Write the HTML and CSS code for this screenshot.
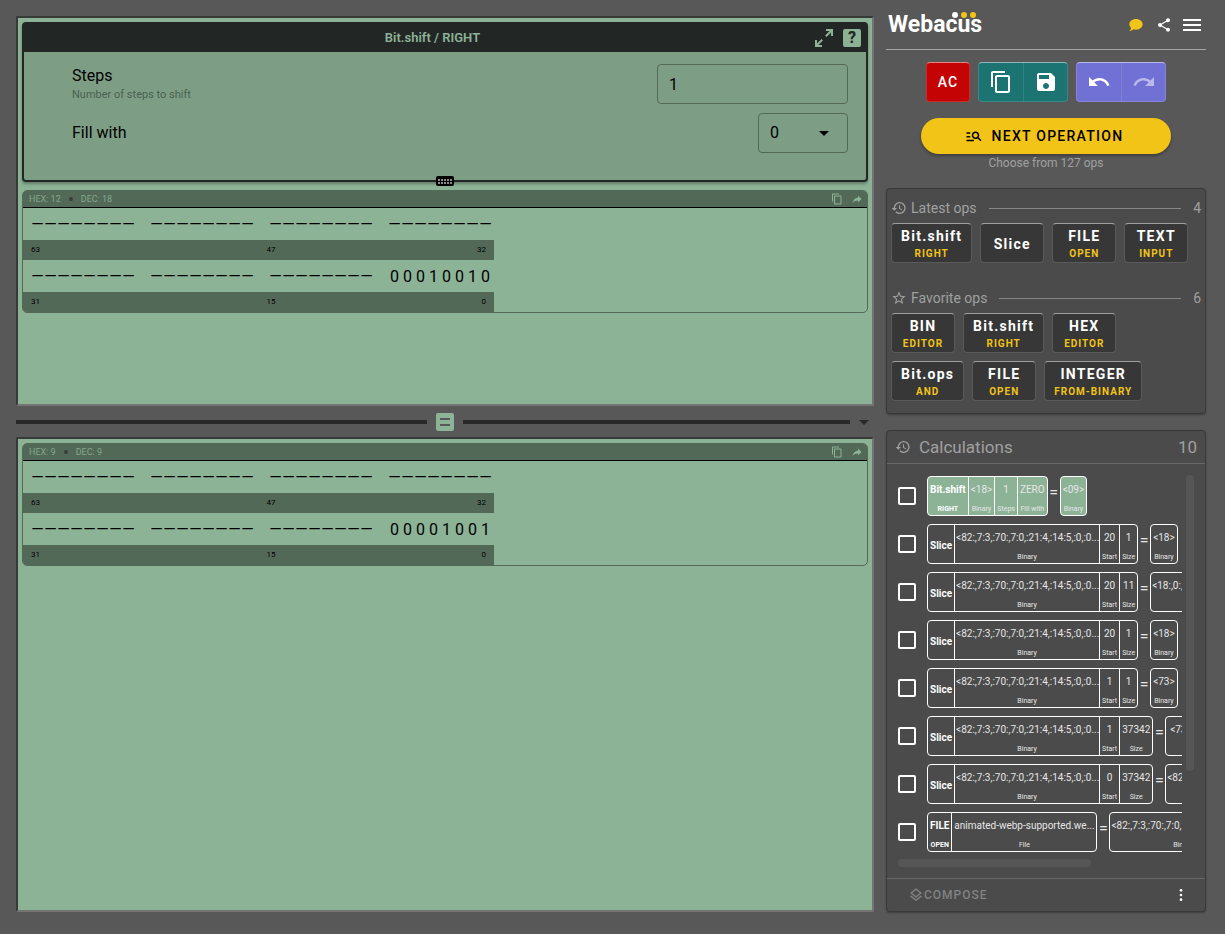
FILE: index.html
```html
<!DOCTYPE html>
<html lang="en">
<head>
<meta charset="utf-8">
<title>Webacus</title>
<link rel="stylesheet" href="styles.css">
</head>
<body>
<svg class="sprite" aria-hidden="true">
  <symbol id="copy" viewBox="0 0 24 24"><path d="M16 1H4c-1.1 0-2 .9-2 2v14h2V3h12V1zm3 4H8c-1.1 0-2 .9-2 2v14c0 1.1.9 2 2 2h11c1.1 0 2-.9 2-2V7c0-1.1-.9-2-2-2zm0 16H8V7h11v14z"/></symbol>
  <symbol id="save" viewBox="0 0 24 24"><path d="M17 3H5c-1.11 0-2 .9-2 2v14c0 1.1.89 2 2 2h14c1.1 0 2-.9 2-2V7l-4-4zm-5 16c-1.66 0-3-1.34-3-3s1.34-3 3-3 3 1.34 3 3-1.34 3-3 3zm3-10H5V5h10v4z"/></symbol>
  <symbol id="undo" viewBox="0 0 24 24"><path d="M12.5 8c-2.65 0-5.05.99-6.9 2.6L2 7v9h9l-3.62-3.62c1.39-1.16 3.16-1.88 5.12-1.88 3.54 0 6.55 2.31 7.6 5.5l2.37-.78C21.08 11.03 17.15 8 12.5 8z"/></symbol>
  <symbol id="redo" viewBox="0 0 24 24"><path d="M18.4 10.6C16.55 8.99 14.15 8 11.5 8c-4.65 0-8.58 3.03-9.96 7.22L3.9 16c1.05-3.19 4.05-5.5 7.6-5.5 1.95 0 3.73.72 5.12 1.88L13 16h9V7l-3.6 3.6z"/></symbol>
  <symbol id="nodes" viewBox="0 0 24 24"><path d="M18 16.08c-.76 0-1.44.3-1.96.77L8.91 12.7c.05-.23.09-.46.09-.7s-.04-.47-.09-.7l7.05-4.11c.54.5 1.25.81 2.04.81 1.66 0 3-1.34 3-3s-1.34-3-3-3-3 1.34-3 3c0 .24.04.47.09.7L8.04 9.81C7.5 9.31 6.79 9 6 9c-1.66 0-3 1.34-3 3s1.34 3 3 3c.79 0 1.5-.31 2.04-.81l7.12 4.16c-.05.21-.08.43-.08.65 0 1.61 1.31 2.92 2.92 2.92s2.92-1.31 2.92-2.92-1.31-2.92-2.92-2.92z"/></symbol>
  <symbol id="chat" viewBox="0 0 24 24"><path d="M12 3C17.5 3 22 6.58 22 11C22 15.42 17.5 19 12 19C10.76 19 9.57 18.82 8.47 18.5C5.55 21 2 21 2 21C4.33 18.67 4.7 17.1 4.75 16.5C3.05 15.07 2 13.13 2 11C2 6.58 6.5 3 12 3Z"/></symbol>
  <symbol id="menu" viewBox="0 0 24 24"><path d="M3 6h18v2H3zM3 11h18v2H3zM3 16h18v2H3z"/></symbol>
  <symbol id="search" viewBox="0 0 24 24"><path d="M7 9H2V7h5v2zm0 3H2v2h5v-2zm13.59 7l-3.83-3.83c-.8.52-1.74.83-2.76.83-2.76 0-5-2.24-5-5s2.24-5 5-5 5 2.24 5 5c0 1.02-.31 1.96-.83 2.75L22 17.59 20.59 19zM17 11c0-1.65-1.35-3-3-3s-3 1.35-3 3 1.35 3 3 3 3-1.35 3-3zM2 19h10v-2H2v2z"/></symbol>
  <symbol id="history" viewBox="0 0 24 24"><path d="M13.5 8H12V13L16.28 15.54L17 14.33L13.5 12.25V8M13 3A9 9 0 0 0 4 12H1L4.96 16.03L9 12H6A7 7 0 0 1 13 5A7 7 0 0 1 20 12A7 7 0 0 1 13 19C11.07 19 9.32 18.21 8.06 16.94L6.64 18.36C8.27 20 10.5 21 13 21A9 9 0 0 0 22 12A9 9 0 0 0 13 3"/></symbol>
  <symbol id="star" viewBox="0 0 24 24"><path d="M12 15.39L8.24 17.66L9.23 13.38L5.91 10.5L10.29 10.13L12 6.09L13.71 10.13L18.09 10.5L14.77 13.38L15.76 17.66M22 9.24L14.81 8.63L12 2L9.19 8.63L2 9.24L7.45 13.97L5.82 21L12 17.27L18.18 21L16.54 13.97L22 9.24Z"/></symbol>
  <symbol id="share" viewBox="0 0 24 24"><path d="M21 12L14 5V9C7 10 4 15 3 20C5.5 16.5 9 14.9 14 14.9V19L21 12Z"/></symbol>
  <symbol id="expand" viewBox="0 0 24 24"><path d="M10 21V19H6.41L10.91 14.5L9.5 13.09L5 17.59V14H3V21H10M14.5 10.91L19 6.41V10H21V3H14V5H17.59L13.09 9.5L14.5 10.91Z"/></symbol>
  <symbol id="layers" viewBox="0 0 24 24"><path d="M12 18.54L19.37 12.8L21 14.07L12 21.07L3 14.07L4.62 12.81L12 18.54M12 16L3 9L12 2L21 9L12 16M12 4.53L6.26 9L12 13.47L17.74 9L12 4.53Z"/></symbol>
  <symbol id="dots" viewBox="0 0 24 24"><circle cx="12" cy="5" r="2"/><circle cx="12" cy="12" r="2"/><circle cx="12" cy="19" r="2"/></symbol>
</svg>
<div class="app">
  <main class="work">
    <section class="screen">
      <div class="operation">
        <header class="operation-head">
          <h1>Bit.shift / RIGHT</h1>
          <div class="head-actions">
            <button class="bare" aria-label="Expand"><svg class="icon24"><use href="#expand"/></svg></button>
            <button class="help" aria-label="Help">?</button>
          </div>
        </header>
        <div class="params">
          <div class="param">
            <div class="param-text"><label for="steps">Steps</label><p class="hint">Number of steps to shift</p></div>
            <input id="steps" class="field" type="text" value="1">
          </div>
          <div class="param">
            <label for="fill">Fill with</label>
            <div class="select-wrap"><select id="fill" class="field"><option>0</option><option>1</option></select></div>
          </div>
        </div>
        <button class="keyboard" aria-label="Keyboard"><svg viewBox="0 0 18 10"><path d="M2 4h14M2 7h14" stroke="#8a8a8a" stroke-width="2" stroke-dasharray="2 1" fill="none"/></svg></button>
      </div>
      <div class="binary" data-hex="12" data-dec="18"></div>
    </section>
    <div class="divider">
      <span class="rule rule-left"></span>
      <button class="equals" aria-label="Calculate"><svg viewBox="0 0 18 18"><path d="M4 5h10v2H4zM4 11h10v2H4z"/></svg></button>
      <span class="rule"></span>
      <button class="caret" aria-label="More"></button>
    </div>
    <section class="screen">
      <div class="binary" data-hex="9" data-dec="9"></div>
    </section>
  </main>
  <aside class="side">
    <header class="brand">
      <div class="logo">Webacus<span class="beads"><i></i><i></i><i></i></span></div>
      <nav class="brand-actions">
        <button class="bare chat" aria-label="Feedback"><svg class="icon16"><use href="#chat"/></svg></button>
        <button class="bare" aria-label="Share"><svg class="icon16"><use href="#nodes"/></svg></button>
        <button class="bare" aria-label="Menu"><svg class="icon24"><use href="#menu"/></svg></button>
      </nav>
    </header>
    <div class="tools">
      <div class="group red"><button>AC</button></div>
      <div class="group teal"><button aria-label="Copy"><svg class="icon24"><use href="#copy"/></svg></button><button aria-label="Save"><svg class="icon24"><use href="#save"/></svg></button></div>
      <div class="group violet"><button aria-label="Undo"><svg class="icon24"><use href="#undo"/></svg></button><button aria-label="Redo" disabled><svg class="icon24"><use href="#redo"/></svg></button></div>
    </div>
    <button class="next"><svg class="icon18"><use href="#search"/></svg>NEXT OPERATION</button>
    <p class="count">Choose from 127 ops</p>
    <section class="panel ops">
      <h2 class="ops-title"><svg class="icon16"><use href="#history"/></svg>Latest ops<span class="line"></span><span>4</span></h2>
      <div class="chips">
        <button class="chip">Bit.shift<small>RIGHT</small></button>
        <button class="chip">Slice</button>
        <button class="chip">FILE<small>OPEN</small></button>
        <button class="chip">TEXT<small>INPUT</small></button>
      </div>
      <h2 class="ops-title"><svg class="icon16"><use href="#star"/></svg>Favorite ops<span class="line"></span><span>6</span></h2>
      <div class="chips">
        <button class="chip">BIN<small>EDITOR</small></button>
        <button class="chip">Bit.shift<small>RIGHT</small></button>
        <button class="chip">HEX<small>EDITOR</small></button>
        <button class="chip">Bit.ops<small>AND</small></button>
        <button class="chip">FILE<small>OPEN</small></button>
        <button class="chip">INTEGER<small>FROM-BINARY</small></button>
      </div>
    </section>
    <section class="panel calcs">
      <h2 class="calcs-title"><svg class="icon16"><use href="#history"/></svg>Calculations<span class="total">10</span></h2>
      <div class="calcs-body">
        <ul class="calc-list"></ul>
        <div class="track-v"><span></span></div>
        <div class="track-h"><span></span></div>
      </div>
      <footer class="calcs-foot">
        <button class="compose" disabled><svg class="icon16"><use href="#layers"/></svg>COMPOSE</button>
        <button class="bare" aria-label="More options"><svg class="icon16"><use href="#dots"/></svg></button>
      </footer>
    </section>
  </aside>
</div>
<script src="app.js"></script>
</body>
</html>
```
FILE: styles.css
```css
* { box-sizing: border-box; }
body { margin: 0; background: #585858; color: #fff; font: 16px/20px Roboto, sans-serif; }
h1, h2, p, ul { margin: 0; padding: 0; font-weight: 400; }
button, input, select { font: inherit; color: inherit; margin: 0; }
button { padding: 0; border: 0; background: none; }
svg { display: block; fill: currentColor; }
.sprite { position: absolute; width: 0; height: 0; }
.icon24 { width: 24px; height: 24px; }
.icon18 { width: 18px; height: 18px; }
.icon16 { width: 16px; height: 16px; }
.bare { display: flex; justify-content: center; }

.app { display: grid; grid-template-columns: minmax(0, 1fr) 320px; gap: 12px; height: 100vh; min-height: 800px; padding: 0 19px 22px 16px; }

/* Left side: operation and result screens */
.work { display: grid; grid-template-rows: minmax(0, 82fr) 31px minmax(0, 100fr); padding-top: 16px; }
.screen { padding: 4px; background: #8db397; border: 2px solid #373a37; border-right-color: #747474; border-bottom-color: #747474; border-radius: 2px; overflow: hidden; }
.operation { position: relative; margin-bottom: 8px; background: #7d9e85; border: 2px solid #222625; border-radius: 4px; box-shadow: 0 2px 3px rgba(0, 0, 0, .3); }
.operation-head { display: grid; grid-template-columns: 1fr auto 1fr; align-items: center; height: 28px; padding-right: 5px; color: #8db397; background: #222625; }
.operation-head h1 { grid-column: 2; padding-right: 20px; font-size: 13px; font-weight: 600; }
.head-actions { display: flex; justify-content: flex-end; align-items: center; gap: 7px; }
.help { width: 18px; height: 18px; border-radius: 2px; background: #8db397; color: #222625; font-size: 16px; font-weight: 800; line-height: 18px; text-align: center; }
.params { display: grid; gap: 9px; padding: 12px 18px 27px 48px; color: #000; }
.param { display: flex; justify-content: space-between; align-items: center; }
.param-text { align-self: end; }
.hint { font-size: 11px; line-height: 18px; color: #4a6150; }
.field { height: 40px; padding: 0 11px; border: 1px solid #536957; border-radius: 4px; background: transparent; }
input.field { width: 191px; }
.select-wrap { position: relative; }
select.field { appearance: none; display: block; width: 90px; }
.select-wrap::after { content: ""; position: absolute; right: 19px; top: 18px; border: 5px solid transparent; border-top-color: #000; border-bottom: 0; pointer-events: none; }
.keyboard { position: absolute; left: 50%; bottom: -6px; width: 18px; height: 10px; margin-left: -9px; border-radius: 2px; background: #000; }

.binary { border: 1px solid #536957; border-radius: 5px; overflow: hidden; color: #000; }
.binary-head { display: flex; align-items: center; height: 17px; padding: 0 4px 0 6px; background: #536957; border-bottom: 1px solid #000; color: #82a68b; font-size: 9px; line-height: 16px; }
.dot { width: 4px; height: 4px; margin: 0 8px; border-radius: 50%; background: #373d39; }
.binary-actions { display: flex; gap: 8px; margin-left: auto; color: #8db397; }
.binary-actions svg { width: 12px; height: 12px; }
.bits { display: flex; gap: 15px; height: 32px; padding-left: 8px; }
.byte { display: grid; grid-template-columns: repeat(8, 13px); line-height: 33px; text-align: center; }
.scale { display: grid; grid-template-columns: 1fr 1fr; width: 471px; height: 20px; background: #536957; font-size: 8px; line-height: 20px; }
.scale div { display: flex; justify-content: space-between; padding: 0 8px; }

.divider { display: flex; align-items: center; padding: 2px 5px 0 0; }
.rule { flex: 1; height: 4px; background: #292929; }
.rule-left { flex: 0 1 411px; }
.equals { width: 18px; height: 18px; margin: 0 9px; border-radius: 2px; background: #8db397; color: #585858; }
.caret { margin-left: 9px; border: 5px solid transparent; border-top-color: #292929; border-bottom: 0; }

/* Sidebar */
.side { display: flex; flex-direction: column; min-height: 0; }
.brand { display: flex; align-items: center; justify-content: space-between; height: 50px; padding: 0 2px; border-bottom: 1px solid #a5a5a5; }
.logo { position: relative; font-size: 23px; font-weight: 700; line-height: 28px; }
.beads { position: absolute; right: 6px; top: 1px; display: flex; gap: 3px; }
.beads i { width: 6px; height: 6px; border-radius: 50%; background: #f2c418; }
.beads i:first-child { background: #fff; }
.brand-actions { display: flex; align-items: center; gap: 4px; }
.brand-actions .bare { width: 24px; }
.chat { color: #f2c418; }
.tools { display: flex; justify-content: center; gap: 8px; margin: 12px 0 16px; }
.group { display: flex; height: 40px; border-radius: 4px; border: 1px solid rgba(255, 255, 255, .15); border-top-color: rgba(255, 255, 255, .5); }
.group button { display: grid; place-items: center; width: 44px; font-size: 14px; font-weight: 500; letter-spacing: 1px; }
.group button + button { border-left: 1px solid rgba(255, 255, 255, .1); }
.group button:disabled svg { opacity: .5; }
.group.red button { width: 42px; }
.red { background: #c40404; }
.teal { background: #1b7472; }
.violet { background: #7170d4; }
.next { display: flex; align-items: center; justify-content: center; gap: 9px; align-self: center; flex: none; width: 250px; height: 36px; border-radius: 18px; background: #f2c418; color: #000; font-size: 14px; font-weight: 500; letter-spacing: .09em; box-shadow: 0 2px 3px rgba(0, 0, 0, .3); }
.next svg { margin-left: -4px; }
.count { color: #a0a0a0; font-size: 12px; line-height: 18px; text-align: center; }
.panel { background: #4b4b4b; border: 1px solid #393939; border-radius: 4px; box-shadow: 0 1px 2px rgba(0, 0, 0, .3); }
.ops { flex: none; margin: 16px 0; padding: 9px 4px 12px; }
.ops-title { display: flex; align-items: center; gap: 4px; color: #a0a0a0; font-size: 14px; }
.ops-title .line { flex: 1; height: 1px; margin: 0 8px; background: #868686; }
.chips { display: flex; flex-wrap: wrap; gap: 8px; margin-top: 5px; padding-right: 8px; }
.chips + .ops-title { margin-top: 25px; }
.chip { min-width: 64px; height: 40px; padding: 3px 9px 0; border: 1px solid #5a5a5a; border-top-color: #a0a0a0; border-radius: 4px; background: #373737; font-size: 14px; font-weight: 700; line-height: 17px; letter-spacing: .09em; }
.chip small { display: block; color: #f2c418; font-size: 10px; letter-spacing: 1px; }

.calcs { flex: 1; min-height: 0; display: flex; flex-direction: column; }
.calcs-title { display: flex; align-items: center; gap: 8px; height: 33px; padding: 0 8px; border-bottom: 1px solid #686868; color: #a0a0a0; font-size: 17px; }
.total { margin-left: auto; }
.calcs-body { flex: 1; min-height: 0; display: grid; grid-template: minmax(0, 1fr) 8px / minmax(0, 1fr) 8px; gap: 4px; padding: 11px; }
.calc-list { display: flex; flex-direction: column; gap: 8px; min-height: 0; padding-top: 1px; overflow: hidden; list-style: none; }
.calc { display: flex; align-items: center; flex: none; height: 40px; }
.calc input { appearance: none; flex: none; width: 18px; height: 18px; margin: 0 11px 0 0; border: 2px solid #fff; border-radius: 2px; }
.box { display: flex; flex: none; height: 40px; border: 1px solid #fff; border-radius: 4px; overflow: hidden; }
.cell { display: flex; flex-direction: column; justify-content: space-between; padding: 5px 2px 1px; color: #e6e6e6; font-size: 10px; line-height: 16px; text-align: center; }
.cell + .cell { border-left: 1px solid #fff; }
.cell small { font-size: 7px; line-height: 9px; }
.name { color: #fff; font-weight: 700; }
.name:not(:has(small)) { justify-content: center; }
.cell.wide { width: 145px; padding-left: 1px; padding-right: 1px; }
.value { white-space: nowrap; }
.eq { flex: none; width: 12px; padding-bottom: 6px; color: #e6e6e6; font-size: 16px; text-align: center; }
.active .box { background: #8db397; }
.track-v, .track-h { display: flex; }
.track-v span { width: 100%; height: 78%; border-radius: 4px; background: #565656; }
.track-h span { width: 68%; border-radius: 4px; background: #565656; }
.calcs-foot { display: flex; align-items: center; justify-content: space-between; height: 33px; padding: 0 16px 0 21px; border-top: 1px solid #686868; }
.compose { display: flex; align-items: center; color: #818181; font-size: 12px; font-weight: 500; letter-spacing: 1px; }
```
FILE: app.js
```js
const icon = id => `<svg><use href="#${id}"/></svg>`;

function bitRows(value) {
  const bits = value.toString(2).padStart(8, '0');
  const byte = chars => `<div class="byte">${[...chars].map(c => `<span>${c}</span>`).join('')}</div>`;
  const empty = byte('————————');
  const scale = (a, b, c) => `<div class="scale"><div>${a}</div><div><span>${b}</span><span>${c}</span></div></div>`;
  return `<div class="bits">${empty.repeat(4)}</div>${scale(63, 47, 32)}` +
    `<div class="bits">${empty.repeat(3)}${byte(bits)}</div>${scale(31, 15, 0)}`;
}

document.querySelectorAll('.binary').forEach(el => {
  el.innerHTML = `<div class="binary-head"><span>HEX: ${el.dataset.hex}</span><i class="dot"></i><span>DEC: ${el.dataset.dec}</span>` +
    `<div class="binary-actions"><button class="bare" aria-label="Copy">${icon('copy')}</button><button class="bare" aria-label="Send">${icon('share')}</button></div></div>` +
    bitRows(Number(el.dataset.dec));
});

const data = '<82:,7:3,:70:,7:0,:21:4,:14:5,:0,:0...';
const slice = (start, size, result) => ({
  name: 'Slice',
  cells: [[data, 'Binary', 'wide'], [start, 'Start'], [size, 'Size']],
  result: [result, 'Binary', result.length > 6 ? 'wide' : '']
});
const calcs = [
  { active: true, name: 'Bit.shift', sub: 'RIGHT', cells: [['<18>', 'Binary'], [1, 'Steps'], ['ZERO', 'Fill with']], result: ['<09>', 'Binary'] },
  slice(20, 1, '<18>'),
  slice(20, 11, '<18:,0:,0:,7:3,:70:,7:0,:21:4,:14:5...'),
  slice(20, 1, '<18>'),
  slice(1, 1, '<73>'),
  slice(1, 37342, '<73:,70:,7:0,:21:4,:14:5,:0,:0,:0,...'),
  slice(0, 37342, data),
  { name: 'FILE', sub: 'OPEN', cells: [['animated-webp-supported.we...', 'File', 'wide']], result: [data, 'Binary', 'wide'] }
];
const esc = s => String(s).replace(/</g, '&lt;');
const cell = ([value, label, cls = '']) => `<div class="cell ${cls}"><span class="value">${esc(value)}</span><small>${label}</small></div>`;

document.querySelector('.calc-list').innerHTML = calcs.map(c =>
  `<li class="calc${c.active ? ' active' : ''}"><input type="checkbox" aria-label="Select ${c.name}">` +
  `<div class="box"><div class="cell name"><span>${c.name}</span>${c.sub ? `<small>${c.sub}</small>` : ''}</div>${c.cells.map(cell).join('')}</div>` +
  `<span class="eq">=</span><div class="box">${cell(c.result)}</div></li>`).join('');
```
